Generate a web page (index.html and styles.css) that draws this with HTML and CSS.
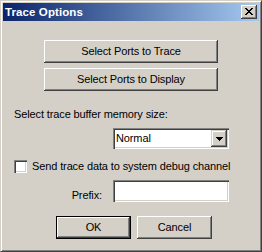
FILE: index.html
```html
<!DOCTYPE html>
<html>
<head>
<meta charset="utf-8">
<link rel="stylesheet" href="styles.css">
</head>
<body>
<div class="window">
  <div class="titlebar">
    <span class="title">Trace Options</span>
    <span class="close">
      <svg width="8" height="7" viewBox="0 0 8 7" shape-rendering="crispEdges">
        <rect x="0" y="0" width="2" height="1" fill="#000"/><rect x="6" y="0" width="2" height="1" fill="#000"/>
        <rect x="1" y="1" width="2" height="1" fill="#000"/><rect x="5" y="1" width="2" height="1" fill="#000"/>
        <rect x="2" y="2" width="4" height="1" fill="#000"/>
        <rect x="3" y="3" width="2" height="1" fill="#000"/>
        <rect x="2" y="4" width="4" height="1" fill="#000"/>
        <rect x="1" y="5" width="2" height="1" fill="#000"/><rect x="5" y="5" width="2" height="1" fill="#000"/>
        <rect x="0" y="6" width="2" height="1" fill="#000"/><rect x="6" y="6" width="2" height="1" fill="#000"/>
      </svg>
    </span>
  </div>
  <div class="content">
    <div class="btn wide">Select Ports to Trace</div>
    <div class="btn wide second">Select Ports to Display</div>
    <div class="label">Select trace buffer memory size:</div>
    <div class="combo">
      <span class="combo-value">Normal</span>
      <span class="combo-btn">
        <svg width="7" height="4" viewBox="0 0 7 4" shape-rendering="crispEdges">
          <rect x="0" y="0" width="7" height="1" fill="#000"/>
          <rect x="1" y="1" width="5" height="1" fill="#000"/>
          <rect x="2" y="2" width="3" height="1" fill="#000"/>
          <rect x="3" y="3" width="1" height="1" fill="#000"/>
        </svg>
      </span>
    </div>
    <div class="check">
      <span class="box"></span>
      <span class="check-text">Send trace data to system debug channel</span>
    </div>
    <div class="prefix-row">
      <span class="prefix-label">Prefix:</span>
      <span class="input"></span>
    </div>
    <div class="actions">
      <div class="btn action default">OK</div>
      <div class="btn action">Cancel</div>
    </div>
  </div>
</div>
</body>
</html>
```

FILE: styles.css
```css
html, body {
  margin: 0;
  padding: 0;
  background: #d4d0c8;
}

.window {
  width: 262px;
  height: 252px;
  box-sizing: border-box;
  background: #d4d0c8;
  border: 1px solid;
  border-color: #d4d0c8 #404040 #404040 #d4d0c8;
  box-shadow: inset 1px 1px #fff, inset -1px -1px #808080;
  padding: 2px;
  display: flex;
  flex-direction: column;
  font-family: "Liberation Sans", Arial, sans-serif;
  font-size: 11px;
  line-height: 13px;
  letter-spacing: -0.12px;
  color: #000;
}

.titlebar {
  height: 18px;
  flex: none;
  background: linear-gradient(to right, #0a246a, #a6caf0);
  display: flex;
  align-items: center;
  justify-content: space-between;
  padding: 0 2px 0 2px;
}

.title {
  color: #fff;
  font-weight: bold;
  font-size: 11.5px;
  line-height: 14px;
  letter-spacing: 0.1px;
}

.close {
  width: 16px;
  height: 14px;
  box-sizing: border-box;
  background: #d4d0c8;
  box-shadow: inset -1px -1px #404040, inset 1px 1px #fff, inset -2px -2px #808080;
  display: flex;
  align-items: center;
  justify-content: center;
  padding: 0 0 1px 0;
}

.close svg {
  display: block;
}

.content {
  flex: 1;
  display: flex;
  flex-direction: column;
  padding: 19px 0 0 11px;
}

.btn {
  box-sizing: border-box;
  height: 23px;
  background: #d4d0c8;
  box-shadow: inset -1px -1px #404040, inset 1px 1px #fff, inset -2px -2px #808080, inset 2px 2px #d4d0c8;
  display: flex;
  align-items: center;
  justify-content: center;
  padding-bottom: 1px;
}

.wide {
  width: 174px;
  margin-left: 30px;
}

.second {
  margin-top: 5px;
}

.label {
  margin-top: 17px;
}

.combo {
  align-self: flex-end;
  margin-right: 30px;
  margin-top: 7px;
  width: 116px;
  height: 21px;
  box-sizing: border-box;
  background: #fff;
  box-shadow: inset 1px 1px #808080, inset 2px 2px #404040, inset -1px -1px #fff, inset -2px -2px #d4d0c8;
  display: flex;
  align-items: center;
  padding: 2px;
}

.combo-value {
  flex: 1;
  padding-left: 1px;
}

.combo-btn {
  width: 16px;
  height: 17px;
  box-sizing: border-box;
  background: #d4d0c8;
  box-shadow: inset -1px -1px #404040, inset 1px 1px #d4d0c8, inset -2px -2px #808080, inset 2px 2px #fff;
  display: flex;
  align-items: center;
  justify-content: center;
  padding-top: 1px;
}

.combo-btn svg {
  display: block;
}

.check {
  margin-top: 11px;
  display: flex;
  align-items: center;
  gap: 5px;
}

.box {
  width: 13px;
  height: 13px;
  box-sizing: border-box;
  background: #fff;
  box-shadow: inset 1px 1px #808080, inset 2px 2px #404040, inset -1px -1px #fff, inset -2px -2px #d4d0c8;
}

.prefix-row {
  margin-top: 7px;
  display: flex;
  justify-content: flex-end;
  padding-right: 30px;
  gap: 11px;
}

.prefix-label {
  margin-top: 9px;
}

.input {
  width: 116px;
  height: 22px;
  box-sizing: border-box;
  background: #fff;
  box-shadow: inset 1px 1px #808080, inset 2px 2px #404040, inset -1px -1px #fff, inset -2px -2px #d4d0c8;
}

.actions {
  margin-top: 14px;
  display: flex;
  gap: 6px;
  padding-left: 42px;
}

.action {
  width: 75px;
}

.default {
  border: 1px solid #000;
}
```
